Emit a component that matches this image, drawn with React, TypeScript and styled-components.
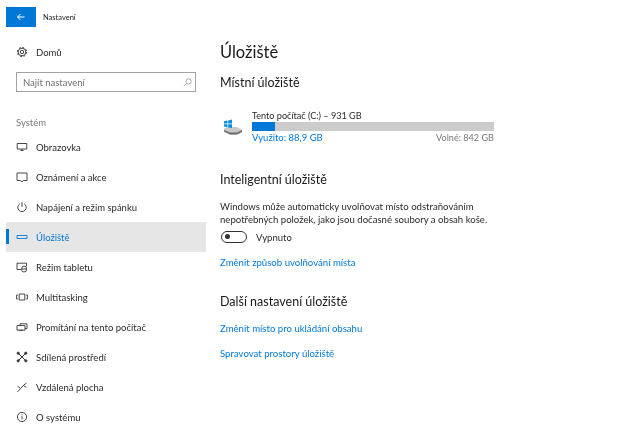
import styled, { createGlobalStyle } from "styled-components"
import type { ReactNode } from "react"

const GlobalStyle = createGlobalStyle`
  html, body {
    margin: 0;
    padding: 0;
    background: #fff;
  }
  * {
    box-sizing: border-box;
  }
`

const Icon = ({ children }: { children: ReactNode }) => (
  <svg width="14" height="14" viewBox="0 0 14 14" fill="none" stroke="#333" strokeWidth="0.9">
    {children}
  </svg>
)

const icons: Record<string, ReactNode> = {
  home: (
    <>
      <circle cx="7" cy="7" r="1.7" />
      <circle cx="7" cy="7" r="3.8" />
      <circle cx="7" cy="7" r="4.6" strokeDasharray="1.8 1.8" strokeWidth="1" />
    </>
  ),
  display: <path d="M2.2 3.5h9.6v5.5H2.2zM5.4 10.5h3.2M7 9v1.5" />,
  notice: <path d="M2 3h10v7.5H8.3L7 12 5.7 10.5H2z" />,
  power: (
    <>
      <path d="M4.8 3.8a4.2 4.2 0 1 0 4.4 0" />
      <path d="M7 2.2v4.6" />
    </>
  ),
  storage: <path d="M2 5.5h10v3H2z" stroke="#0078d7" />,
  tablet: (
    <>
      <path d="M6 9.5H2V3.2h9.5v3" />
      <rect x="6.8" y="6.4" width="4.6" height="5.4" rx="1.5" />
      <path d="M6.8 9h4.6" />
    </>
  ),
  multi: <path d="M4.2 4h5.6v6H4.2zM2.8 5H1.6v4h1.2M11.2 5h1.2v4h-1.2" />,
  project: <path d="M5 5.4V3.8h7v4.8H10M2 5.6h8v4.6H2zM4.4 10.2h3.2" />,
  share: (
    <>
      <path d="M3.4 3.4l7.2 7.2M10.6 3.4l-7.2 7.2" strokeWidth="1" />
      <circle cx="3.2" cy="3.2" r="1.1" fill="#333" />
      <circle cx="10.8" cy="3.2" r="1.1" fill="#333" />
      <circle cx="3.2" cy="10.8" r="1.1" fill="#333" />
      <circle cx="10.8" cy="10.8" r="1.1" fill="#333" />
    </>
  ),
  remote: <path d="M2.5 6l3 2.6-3 3.2M11.5 3L8.4 5.4l3 2M5.5 8.6l2.9-3.2" />,
  info: (
    <>
      <circle cx="7" cy="7" r="4.6" />
      <path d="M7 6.2v3.2M7 4.4v1" />
    </>
  ),
}

const navItems = [
  { icon: "display", label: "Obrazovka" },
  { icon: "notice", label: "Oznámení a akce" },
  { icon: "power", label: "Napájení a režim spánku" },
  { icon: "storage", label: "Úložiště", active: true },
  { icon: "tablet", label: "Režim tabletu" },
  { icon: "multi", label: "Multitasking" },
  { icon: "project", label: "Promítání na tento počítač" },
  { icon: "share", label: "Sdílená prostředí" },
  { icon: "remote", label: "Vzdálená plocha" },
  { icon: "info", label: "O systému" },
]

export default function App() {
  return (
    <Page>
      <GlobalStyle />
      <TitleBar>
        <BackButton>
          <svg width="10" height="10" viewBox="0 0 10 10" fill="none" stroke="#fff" strokeWidth="1">
            <path d="M8.5 5H1.5M4.5 2L1.5 5l3 3" />
          </svg>
        </BackButton>
        <AppTitle>Nastavení</AppTitle>
      </TitleBar>
      <Body>
        <Sidebar>
          <NavRow>
            <Icon>{icons.home}</Icon>
            <span>Domů</span>
          </NavRow>
          <SearchBox>
            <span>Najít nastavení</span>
            <svg width="9" height="9" viewBox="0 0 11 11" fill="none" stroke="#8a8a8a" strokeWidth="0.9">
              <circle cx="6.8" cy="4.2" r="3.2" />
              <path d="M4.5 6.5L1 10" />
            </svg>
          </SearchBox>
          <GroupLabel>Systém</GroupLabel>
          {navItems.map((item) => (
            <NavRow key={item.label} $active={item.active}>
              <Icon>{icons[item.icon]}</Icon>
              <span>{item.label}</span>
            </NavRow>
          ))}
        </Sidebar>
        <Content>
          <PageTitle>Úložiště</PageTitle>
          <SectionTitle>Místní úložiště</SectionTitle>
          <Drive>
            <svg width="20" height="18" viewBox="0 0 20 18">
              <path d="M1 10.5l4-1.5h9l5 3v2l-5 2.5H7L1 13.5z" fill="#c9c9c9" />
              <path d="M1 12l6 2.6h7L19 12v2l-5 2.5H7L1 13.5z" fill="#6d6d6d" />
              <path d="M1 3.2l3.5-.7v3H1zM5.2 2.4L9 1.6v3.9H5.2zM1 6.2h3.5v3L1 8.6zM5.2 6.2H9v3.9l-3.8-.7z" fill="#0a8ee0" />
            </svg>
            <DriveInfo>
              <DriveName>Tento počítač (C:) – 931 GB</DriveName>
              <Bar>
                <BarFill style={{ width: `${(88.9 / 931) * 100}%` }} />
              </Bar>
              <DriveStats>
                <UsedLink>Využito: 88,9 GB</UsedLink>
                <FreeText>Volné: 842 GB</FreeText>
              </DriveStats>
            </DriveInfo>
          </Drive>
          <SmartTitle>Inteligentní úložiště</SmartTitle>
          <Description>
            Windows může automaticky uvolňovat místo odstraňováním
            <br />
            nepotřebných položek, jako jsou dočasné soubory a obsah koše.
          </Description>
          <ToggleRow>
            <Toggle />
            <span>Vypnuto</span>
          </ToggleRow>
          <SmartLink>Změnit způsob uvolňování místa</SmartLink>
          <MoreTitle>Další nastavení úložiště</MoreTitle>
          <MoreLink>Změnit místo pro ukládání obsahu</MoreLink>
          <MoreLink>Spravovat prostory úložiště</MoreLink>
        </Content>
      </Body>
    </Page>
  )
}

const Page = styled.div`
  width: 633px;
  height: 438px;
  overflow: hidden;
  background: #fff;
  color: #1f1f1f;
  font-family: Lato, "Noto Sans", sans-serif;
  font-size: 9.5px;
  padding-top: 7px;
  filter: blur(0.3px);
`

const TitleBar = styled.div`
  display: flex;
  align-items: center;
  height: 20px;
  padding-left: 6px;
  gap: 7px;
`

const BackButton = styled.div`
  width: 30px;
  height: 20px;
  background: #0078d7;
  display: flex;
  align-items: center;
  justify-content: center;
`

const AppTitle = styled.div`
  font-size: 7.5px;
  color: #222;
`

const Body = styled.div`
  display: flex;
  padding-left: 6px;
`

const Sidebar = styled.nav`
  width: 200px;
  flex: none;
  padding-top: 10px;
`

const NavRow = styled.div<{ $active?: boolean }>`
  height: 30px;
  display: flex;
  align-items: center;
  gap: 7px;
  padding-left: 9px;
  position: relative;
  font-size: 9.5px;
  color: ${(p) => (p.$active ? "#0078d7" : "#2b2b2b")};
  background: ${(p) => (p.$active ? "#e6e6e6" : "transparent")};

  &::before {
    content: "";
    display: ${(p) => (p.$active ? "block" : "none")};
    position: absolute;
    left: 0;
    top: 7px;
    width: 3px;
    height: 15px;
    background: #0078d7;
  }
`

const SearchBox = styled.div`
  width: 180px;
  height: 20px;
  margin: 5px 0 0 10px;
  border: 1px solid #a3a3a3;
  display: flex;
  align-items: center;
  justify-content: space-between;
  padding: 0 3px 0 6px;
  font-size: 9.5px;
  color: #707070;
`

const GroupLabel = styled.div`
  height: 20px;
  margin-top: 20px;
  padding-left: 10px;
  display: flex;
  align-items: center;
  font-size: 9.5px;
  color: #777;
`

const Content = styled.main`
  flex: 1;
  padding: 12px 0 0 14px;
`

const PageTitle = styled.h1`
  margin: 0;
  font-size: 16.5px;
  line-height: 26px;
  font-weight: 400;
  color: #1a1a1a;
`

const SectionTitle = styled.h2`
  margin: 8px 0 0;
  font-size: 12.5px;
  line-height: 20px;
  font-weight: 400;
  color: #1a1a1a;
`

const SmartTitle = styled(SectionTitle)`
  margin-top: 25px;
`

const MoreTitle = styled(SectionTitle)`
  margin-top: 22px;
`

const Drive = styled.div`
  display: flex;
  align-items: center;
  gap: 9px;
  margin: 16px 0 0 3px;
  width: 271px;
`

const DriveInfo = styled.div`
  flex: 1;
`

const DriveName = styled.div`
  font-size: 9.1px;
  line-height: 13px;
  color: #2b2b2b;
`

const Bar = styled.div`
  height: 9px;
  background: #cccccc;
`

const BarFill = styled.div`
  height: 100%;
  background: #0078d7;
`

const DriveStats = styled.div`
  display: flex;
  justify-content: space-between;
  font-size: 9.5px;
  line-height: 14px;
`

const UsedLink = styled.span`
  color: #0078d7;
`

const FreeText = styled.span`
  color: #777;
  font-size: 9.1px;
`

const Description = styled.p`
  margin: 10px 0 0;
  font-size: 9.6px;
  line-height: 13px;
  color: #2b2b2b;
`

const ToggleRow = styled.div`
  display: flex;
  align-items: center;
  gap: 9px;
  height: 12px;
  margin: 5px 0 0 1px;
  font-size: 9.5px;
  color: #2b2b2b;
`

const Toggle = styled.div`
  width: 26px;
  height: 12px;
  border: 1.5px solid #333;
  border-radius: 6px;
  position: relative;

  &::after {
    content: "";
    position: absolute;
    left: 3px;
    top: 2px;
    width: 5px;
    height: 5px;
    border-radius: 50%;
    background: #333;
  }
`

const ActionLink = styled.div`
  font-size: 9.6px;
  line-height: 14px;
  color: #0078d7;
`

const SmartLink = styled(ActionLink)`
  margin-top: 13px;
`

const MoreLink = styled(ActionLink)`
  margin-top: 10px;

  & + & {
    margin-top: 11px;
  }
`
